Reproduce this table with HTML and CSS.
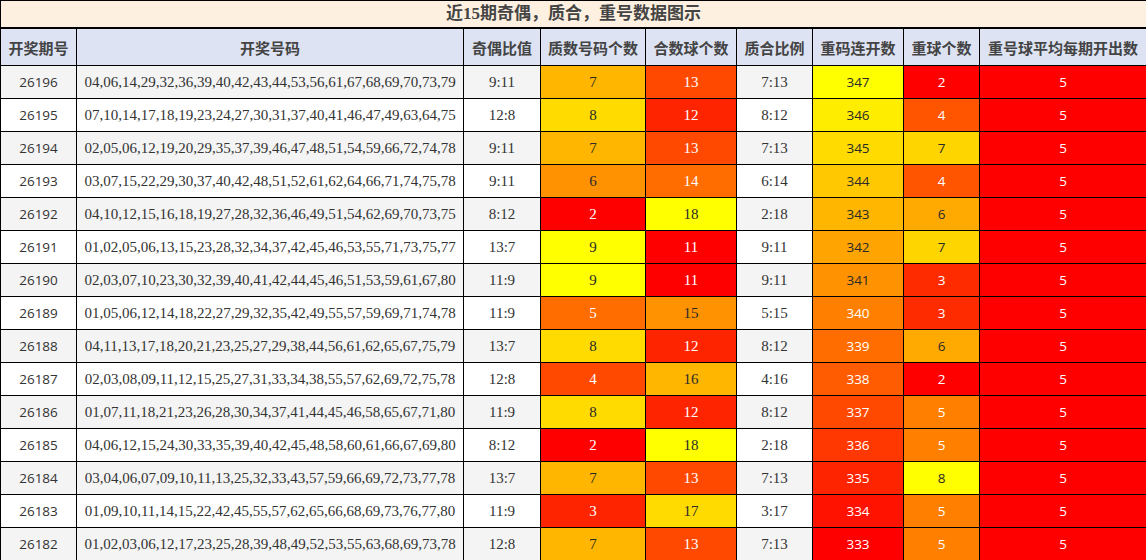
FILE: index.html
```html
<!DOCTYPE html>
<html lang="zh">
<head>
<meta charset="utf-8">
<title>近15期奇偶，质合，重号数据图示</title>
<link rel="stylesheet" href="styles.css">
</head>
<body>
<table class="chart">
<colgroup>
<col class="c1"><col class="c2"><col class="c3"><col class="c4"><col class="c5"><col class="c6"><col class="c7"><col class="c8"><col class="c9">
</colgroup>
<thead>
<tr class="title-row"><th colspan="9">近15期奇偶，质合，重号数据图示</th></tr>
<tr class="head-row"><th>开奖期号</th><th>开奖号码</th><th>奇偶比值</th><th>质数号码个数</th><th>合数球个数</th><th>质合比例</th><th>重码连开数</th><th>重球个数</th><th>重号球平均每期开出数</th></tr>
</thead>
<tbody>
<tr class="odd"><td class="sans">26196</td><td>04,06,14,29,32,36,39,40,42,43,44,53,56,61,67,68,69,70,73,79</td><td>9:11</td><td class="dk" style="background:#ffb600">7</td><td class="lt" style="background:#ff4900">13</td><td>7:13</td><td class="sans dk" style="background:#ffff00">347</td><td class="sans lt" style="background:#ff0000">2</td><td class="sans lt" style="background:#ff0000">5</td></tr>
<tr><td class="sans">26195</td><td>07,10,14,17,18,19,23,24,27,30,31,37,40,41,46,47,49,63,64,75</td><td>12:8</td><td class="dk" style="background:#ffdb00">8</td><td class="lt" style="background:#ff2400">12</td><td>8:12</td><td class="sans dk" style="background:#ffed00">346</td><td class="sans lt" style="background:#ff5500">4</td><td class="sans lt" style="background:#ff0000">5</td></tr>
<tr class="odd"><td class="sans">26194</td><td>02,05,06,12,19,20,29,35,37,39,46,47,48,51,54,59,66,72,74,78</td><td>9:11</td><td class="dk" style="background:#ffb600">7</td><td class="lt" style="background:#ff4900">13</td><td>7:13</td><td class="sans dk" style="background:#ffdb00">345</td><td class="sans dk" style="background:#ffd500">7</td><td class="sans lt" style="background:#ff0000">5</td></tr>
<tr><td class="sans">26193</td><td>03,07,15,22,29,30,37,40,42,48,51,52,61,62,64,66,71,74,75,78</td><td>9:11</td><td class="dk" style="background:#ff9200">6</td><td class="lt" style="background:#ff6d00">14</td><td>6:14</td><td class="sans dk" style="background:#ffc800">344</td><td class="sans lt" style="background:#ff5500">4</td><td class="sans lt" style="background:#ff0000">5</td></tr>
<tr class="odd"><td class="sans">26192</td><td>04,10,12,15,16,18,19,27,28,32,36,46,49,51,54,62,69,70,73,75</td><td>8:12</td><td class="lt" style="background:#ff0000">2</td><td class="dk" style="background:#ffff00">18</td><td>2:18</td><td class="sans dk" style="background:#ffb600">343</td><td class="sans dk" style="background:#ffaa00">6</td><td class="sans lt" style="background:#ff0000">5</td></tr>
<tr><td class="sans">26191</td><td>01,02,05,06,13,15,23,28,32,34,37,42,45,46,53,55,71,73,75,77</td><td>13:7</td><td class="dk" style="background:#ffff00">9</td><td class="lt" style="background:#ff0000">11</td><td>9:11</td><td class="sans dk" style="background:#ffa400">342</td><td class="sans dk" style="background:#ffd500">7</td><td class="sans lt" style="background:#ff0000">5</td></tr>
<tr class="odd"><td class="sans">26190</td><td>02,03,07,10,23,30,32,39,40,41,42,44,45,46,51,53,59,61,67,80</td><td>11:9</td><td class="dk" style="background:#ffff00">9</td><td class="lt" style="background:#ff0000">11</td><td>9:11</td><td class="sans dk" style="background:#ff9200">341</td><td class="sans lt" style="background:#ff2b00">3</td><td class="sans lt" style="background:#ff0000">5</td></tr>
<tr><td class="sans">26189</td><td>01,05,06,12,14,18,22,27,29,32,35,42,49,55,57,59,69,71,74,78</td><td>11:9</td><td class="lt" style="background:#ff6d00">5</td><td class="dk" style="background:#ff9200">15</td><td>5:15</td><td class="sans lt" style="background:#ff7f00">340</td><td class="sans lt" style="background:#ff2b00">3</td><td class="sans lt" style="background:#ff0000">5</td></tr>
<tr class="odd"><td class="sans">26188</td><td>04,11,13,17,18,20,21,23,25,27,29,38,44,56,61,62,65,67,75,79</td><td>13:7</td><td class="dk" style="background:#ffdb00">8</td><td class="lt" style="background:#ff2400">12</td><td>8:12</td><td class="sans lt" style="background:#ff6d00">339</td><td class="sans dk" style="background:#ffaa00">6</td><td class="sans lt" style="background:#ff0000">5</td></tr>
<tr><td class="sans">26187</td><td>02,03,08,09,11,12,15,25,27,31,33,34,38,55,57,62,69,72,75,78</td><td>12:8</td><td class="lt" style="background:#ff4900">4</td><td class="dk" style="background:#ffb600">16</td><td>4:16</td><td class="sans lt" style="background:#ff5b00">338</td><td class="sans lt" style="background:#ff0000">2</td><td class="sans lt" style="background:#ff0000">5</td></tr>
<tr class="odd"><td class="sans">26186</td><td>01,07,11,18,21,23,26,28,30,34,37,41,44,45,46,58,65,67,71,80</td><td>11:9</td><td class="dk" style="background:#ffdb00">8</td><td class="lt" style="background:#ff2400">12</td><td>8:12</td><td class="sans lt" style="background:#ff4900">337</td><td class="sans lt" style="background:#ff8000">5</td><td class="sans lt" style="background:#ff0000">5</td></tr>
<tr><td class="sans">26185</td><td>04,06,12,15,24,30,33,35,39,40,42,45,48,58,60,61,66,67,69,80</td><td>8:12</td><td class="lt" style="background:#ff0000">2</td><td class="dk" style="background:#ffff00">18</td><td>2:18</td><td class="sans lt" style="background:#ff3700">336</td><td class="sans lt" style="background:#ff8000">5</td><td class="sans lt" style="background:#ff0000">5</td></tr>
<tr class="odd"><td class="sans">26184</td><td>03,04,06,07,09,10,11,13,25,32,33,43,57,59,66,69,72,73,77,78</td><td>13:7</td><td class="dk" style="background:#ffb600">7</td><td class="lt" style="background:#ff4900">13</td><td>7:13</td><td class="sans lt" style="background:#ff2400">335</td><td class="sans dk" style="background:#ffff00">8</td><td class="sans lt" style="background:#ff0000">5</td></tr>
<tr><td class="sans">26183</td><td>01,09,10,11,14,15,22,42,45,55,57,62,65,66,68,69,73,76,77,80</td><td>11:9</td><td class="lt" style="background:#ff2400">3</td><td class="dk" style="background:#ffdb00">17</td><td>3:17</td><td class="sans lt" style="background:#ff1200">334</td><td class="sans lt" style="background:#ff8000">5</td><td class="sans lt" style="background:#ff0000">5</td></tr>
<tr class="odd"><td class="sans">26182</td><td>01,02,03,06,12,17,23,25,28,39,48,49,52,53,55,63,68,69,73,78</td><td>12:8</td><td class="dk" style="background:#ffb600">7</td><td class="lt" style="background:#ff4900">13</td><td>7:13</td><td class="sans lt" style="background:#ff0000">333</td><td class="sans lt" style="background:#ff8000">5</td><td class="sans lt" style="background:#ff0000">5</td></tr>
</tbody>
</table>
</body>
</html>
```
FILE: styles.css
```css
html, body {
  margin: 0;
  padding: 0;
  background: #ffffff;
}

.chart {
  width: 1146px;
  table-layout: fixed;
  border-collapse: collapse;
  font-family: "Liberation Serif", "Noto Sans CJK SC", serif;
  font-size: 15px;
  color: #333333;
}

.c1 { width: 76px; }
.c2 { width: 387px; }
.c3 { width: 77px; }
.c4 { width: 105px; }
.c5 { width: 91px; }
.c6 { width: 76px; }
.c7 { width: 91px; }
.c8 { width: 76px; }
.c9 { width: 167px; }

.chart th,
.chart td {
  border: 1px solid #000000;
  padding: 0;
  text-align: center;
  vertical-align: middle;
  white-space: nowrap;
  overflow: hidden;
}

.title-row th {
  height: 26px;
  background: #fef0e1;
  border-bottom: 2px solid #000000;
  font-size: 17px;
  font-weight: bold;
  color: #444444;
  line-height: 24px;
}

.head-row th {
  height: 36px;
  background: #dde3f3;
  font-family: "Noto Sans CJK SC", sans-serif;
  font-size: 15px;
  font-weight: bold;
  color: #444444;
}

.chart tbody td {
  height: 32px;
  background: #ffffff;
}

.chart tbody tr.odd td {
  background: #f4f4f4;
}

.chart td.sans {
  font-family: "Open Sans", "DejaVu Sans", sans-serif;
  font-size: 13.5px;
}

.chart td.dk {
  color: #2a2a2a;
}

.chart td.lt {
  color: #ffffff;
}
```
